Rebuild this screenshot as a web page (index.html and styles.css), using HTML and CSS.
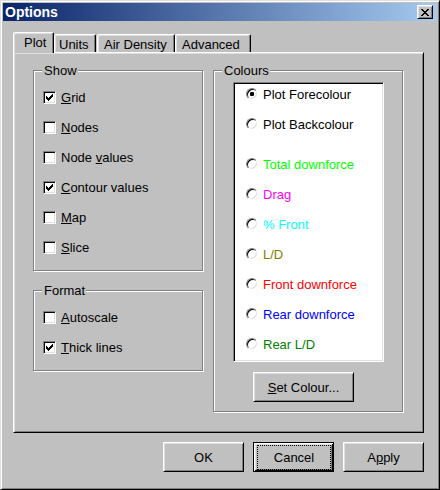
FILE: index.html
```html
<!DOCTYPE html>
<html>
<head>
<meta charset="utf-8">
<title>Options</title>
<link rel="stylesheet" href="styles.css">
</head>
<body>
<div class="window">
  <div class="titlebar">
    <span class="title">Options</span>
    <span class="close">
      <svg width="8" height="7" viewBox="0 0 8 7" shape-rendering="crispEdges"><path d="M0 0h2v1h-2z M6 0h2v1h-2z M1 1h2v1h-2z M5 1h2v1h-2z M2 2h4v1h-4z M3 3h2v1h-2z M2 4h4v1h-4z M1 5h2v1h-2z M5 5h2v1h-2z M0 6h2v1h-2z M6 6h2v1h-2z" fill="#000"/></svg>
    </span>
  </div>
  <div class="body">
    <div class="tabs">
      <div class="tab tab-active tab-plot">Plot</div>
      <div class="tab tab-units">Units</div>
      <div class="tab tab-air">Air Density</div>
      <div class="tab tab-adv">Advanced</div>
    </div>
    <div class="panel">
      <div class="col-left">
        <div class="group group-show">
          <div class="legend">Show</div>
          <div class="check"><span class="box"><svg class="tick" width="7" height="7" viewBox="0 0 7 7" shape-rendering="crispEdges"><path d="M0 2h1v3h-1z M1 3h1v3h-1z M2 4h1v3h-1z M3 3h1v3h-1z M4 2h1v3h-1z M5 1h1v3h-1z M6 0h1v3h-1z" fill="#000"/></svg></span><span class="label"><span class="ak">G</span>rid</span></div>
          <div class="check"><span class="box"></span><span class="label"><span class="ak">N</span>odes</span></div>
          <div class="check"><span class="box"></span><span class="label">Node <span class="ak">v</span>alues</span></div>
          <div class="check"><span class="box"><svg class="tick" width="7" height="7" viewBox="0 0 7 7" shape-rendering="crispEdges"><path d="M0 2h1v3h-1z M1 3h1v3h-1z M2 4h1v3h-1z M3 3h1v3h-1z M4 2h1v3h-1z M5 1h1v3h-1z M6 0h1v3h-1z" fill="#000"/></svg></span><span class="label"><span class="ak">C</span>ontour values</span></div>
          <div class="check"><span class="box"></span><span class="label"><span class="ak">M</span>ap</span></div>
          <div class="check"><span class="box"></span><span class="label"><span class="ak">S</span>lice</span></div>
        </div>
        <div class="group group-format">
          <div class="legend">Format</div>
          <div class="check"><span class="box"></span><span class="label"><span class="ak">A</span>utoscale</span></div>
          <div class="check"><span class="box"><svg class="tick" width="7" height="7" viewBox="0 0 7 7" shape-rendering="crispEdges"><path d="M0 2h1v3h-1z M1 3h1v3h-1z M2 4h1v3h-1z M3 3h1v3h-1z M4 2h1v3h-1z M5 1h1v3h-1z M6 0h1v3h-1z" fill="#000"/></svg></span><span class="label"><span class="ak">T</span>hick lines</span></div>
        </div>
      </div>
      <div class="group group-colours">
        <div class="legend">Colours</div>
        <div class="listbox">
          <div class="radio-row"><span class="radio"><span class="dot"></span></span><span class="c-black">Plot Forecolour</span></div>
          <div class="radio-row radio-row-spaced"><span class="radio"></span><span class="c-black">Plot Backcolour</span></div>
          <div class="radio-row"><span class="radio"></span><span class="c-lime">Total downforce</span></div>
          <div class="radio-row"><span class="radio"></span><span class="c-magenta">Drag</span></div>
          <div class="radio-row"><span class="radio"></span><span class="c-cyan">% Front</span></div>
          <div class="radio-row"><span class="radio"></span><span class="c-olive">L/D</span></div>
          <div class="radio-row"><span class="radio"></span><span class="c-red">Front downforce</span></div>
          <div class="radio-row"><span class="radio"></span><span class="c-blue">Rear downforce</span></div>
          <div class="radio-row"><span class="radio"></span><span class="c-green">Rear L/D</span></div>
        </div>
        <div class="btn btn-set"><span class="ak">S</span>et Colour...</div>
      </div>
    </div>
    <div class="buttons">
      <div class="btn btn-dlg">OK</div>
      <div class="btn btn-dlg btn-default"><span class="focus">Cancel</span></div>
      <div class="btn btn-dlg">A<span class="ak">p</span>ply</div>
    </div>
  </div>
</div>
</body>
</html>
```
FILE: styles.css
```css
html, body {
  margin: 0;
  padding: 0;
  background: #c0c0c0;
}

body {
  font-family: "Liberation Sans", Arial, sans-serif;
  font-size: 13px;
  line-height: 15px;
  color: #000;
}

.window {
  width: 440px;
  height: 490px;
  box-sizing: border-box;
  background: #c0c0c0;
  border: 1px solid;
  border-color: #dfdfdf #000 #000 #dfdfdf;
  box-shadow: inset 1px 1px #fff, inset -1px -1px #808080;
  padding: 2px;
  display: flex;
  flex-direction: column;
}

.titlebar {
  height: 18px;
  display: flex;
  align-items: center;
  background: linear-gradient(to right, #0a246a, #a6caf0);
  padding: 0 4px 0 2px;
}

.title {
  flex: 1;
  color: #fff;
  font-weight: bold;
  font-size: 14px;
  line-height: 18px;
}

.close {
  width: 16px;
  height: 14px;
  box-sizing: border-box;
  background: #c0c0c0;
  border: 1px solid;
  border-color: #fff #000 #000 #fff;
  box-shadow: inset 1px 1px #dfdfdf, inset -1px -1px #808080;
  display: flex;
  justify-content: center;
  align-items: center;
}

.close svg {
  display: block;
  margin: 0 1px 0 0;
}

.body {
  padding: 11px 13px 0 10px;
  display: flex;
  flex-direction: column;
}

.tabs {
  display: flex;
  align-items: flex-end;
  height: 20px;
}

.tab {
  box-sizing: border-box;
  height: 18px;
  border: 1px solid;
  border-bottom: 0;
  border-color: #fff #000 transparent #fff;
  border-radius: 2px 2px 0 0;
  box-shadow: inset -1px 0 #808080, inset 1px 1px #dfdfdf;
  background: #c0c0c0;
  padding: 2px 0 0 4px;
  white-space: nowrap;
}

.tab-active {
  height: 21px;
  margin-bottom: -1px;
  position: relative;
  z-index: 2;
  padding-top: 2px;
}

.tab-plot { width: 41px; padding-left: 10px; }
.tab-units { width: 42px; padding-left: 4px; }
.tab-air { width: 78px; padding-left: 6px; margin-left: 1px; }
.tab-adv { width: 76px; padding-left: 6px; }

.panel {
  height: 381px;
  box-sizing: border-box;
  border: 1px solid;
  border-color: #fff #000 #000 #fff;
  box-shadow: inset 1px 1px #dfdfdf, inset -1px -1px #808080;
  padding: 17px 0 0 19px;
  display: flex;
  align-items: flex-start;
  gap: 10px;
}

.col-left {
  display: flex;
  flex-direction: column;
}

.group {
  box-sizing: border-box;
  border: 1px solid #808080;
  box-shadow: inset 1px 1px #fff, 1px 1px #fff;
  padding: 0 8px 8px;
  display: flex;
  flex-direction: column;
  align-items: flex-start;
}

.group-show { width: 170px; }
.group-format { width: 170px; margin-top: 19px; }
.group-colours { width: 190px; padding-bottom: 9px; }

.legend {
  margin-top: -8px;
  margin-bottom: 4px;
  height: 15px;
  background: #c0c0c0;
  padding: 0 1px 0 2px;
}

.check {
  height: 30px;
  display: flex;
  align-items: center;
  gap: 5px;
  padding-left: 1px;
}

.box {
  width: 13px;
  height: 13px;
  box-sizing: border-box;
  background: #fff;
  border: 1px solid;
  border-color: #808080 #fff #fff #808080;
  box-shadow: inset 1px 1px #000, inset -1px -1px #dfdfdf;
  display: flex;
  justify-content: center;
  align-items: center;
}

.tick { display: block; }

.ak { text-decoration: underline; }

.listbox {
  width: 151px;
  height: 280px;
  box-sizing: border-box;
  margin-left: 11px;
  background: #fff;
  border: 1px solid;
  border-color: #808080 #fff #fff #808080;
  box-shadow: inset 1px 1px #000, inset -1px -1px #dfdfdf;
  padding: 1px 0 0 12px;
}

.radio-row {
  height: 20px;
  display: flex;
  align-items: center;
  gap: 5px;
  margin-bottom: 10px;
  white-space: nowrap;
}

.radio-row-spaced { margin-bottom: 20px; }

.radio {
  width: 12px;
  height: 12px;
  box-sizing: border-box;
  border-radius: 50%;
  background: #fff;
  border: 1px solid;
  border-color: #808080 #fff #fff #808080;
  box-shadow: inset 1px 1px #000, inset -1px -1px #dfdfdf;
  display: flex;
  justify-content: center;
  align-items: center;
}

.dot {
  width: 4px;
  height: 4px;
  border-radius: 1px;
  background: #000;
}

.c-black { color: #000; }
.c-lime { color: #00ff00; }
.c-magenta { color: #ff00ff; }
.c-cyan { color: #00ffff; }
.c-olive { color: #808000; }
.c-red { color: #ff0000; }
.c-blue { color: #0000ff; }
.c-green { color: #008000; }

.btn {
  box-sizing: border-box;
  height: 30px;
  background: #c0c0c0;
  border: 1px solid;
  border-color: #fff #000 #000 #fff;
  box-shadow: inset 1px 1px #dfdfdf, inset -1px -1px #808080;
  display: flex;
  justify-content: center;
  align-items: center;
  white-space: nowrap;
}

.btn-set {
  width: 101px;
  margin: 10px 0 0 31px;
}

.buttons {
  display: flex;
  justify-content: flex-end;
  gap: 9px;
  margin-top: 9px;
}

.btn-dlg { width: 81px; }

.btn-default {
  border-color: #000;
  box-shadow: inset 1px 1px #fff, inset -1px -1px #000, inset 2px 2px #dfdfdf, inset -2px -2px #808080;
  align-items: stretch;
  padding: 2px 2px 1px 3px;
}

.focus {
  flex: 1;
  border: 1px dotted #000;
  display: flex;
  justify-content: center;
  align-items: center;
}
```
